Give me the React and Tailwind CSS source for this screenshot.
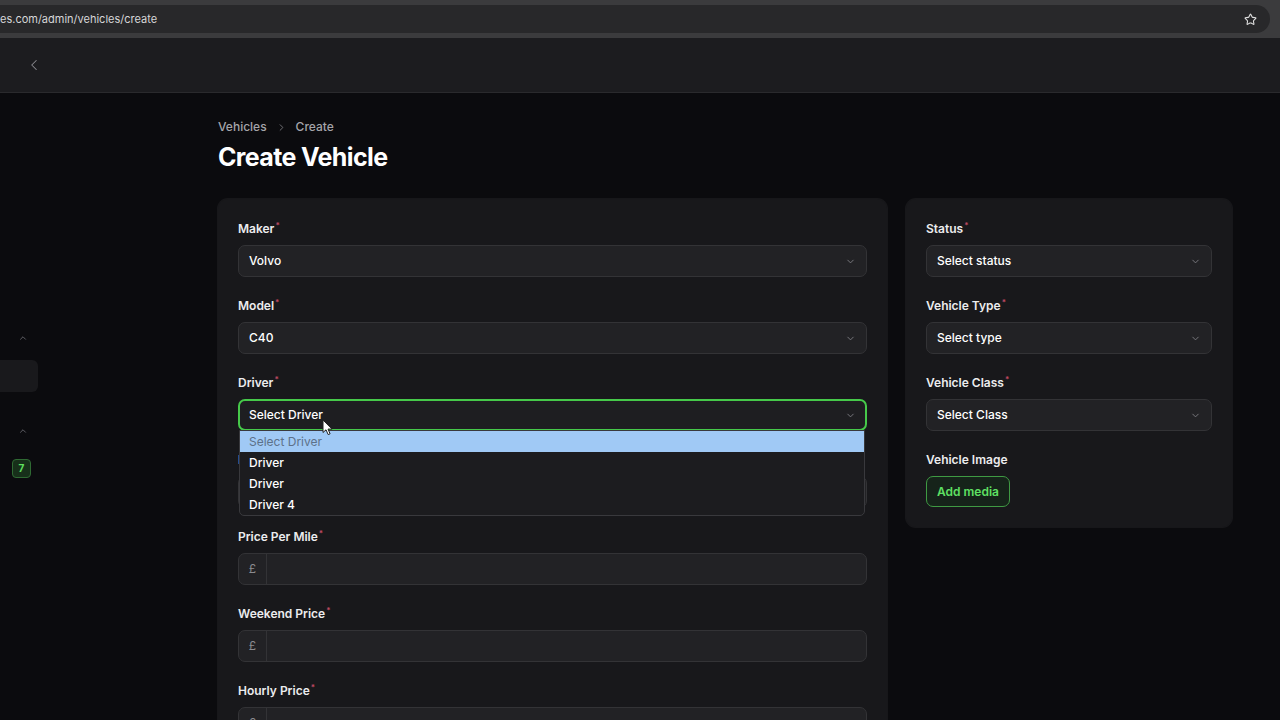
import React from "react";
import { ChevronDown, ChevronLeft, ChevronRight, ChevronUp, Star } from "lucide-react";

function Label({ text, required = true }) {
  return (
    <div className="h-5 flex items-center text-[12px] font-semibold text-[#ececee] leading-5">
      <span>{text}</span>
      {required && <span className="text-[#c04a63] text-[8px] leading-none -mt-[9px] ml-[1px]">*</span>}
    </div>
  );
}

function SelectField({ label, value, required = true }) {
  return (
    <div>
      <Label text={label} required={required} />
      <div className="mt-[6px] h-[32px] rounded-[7px] border border-[#333336] bg-[#222225] px-[10px] flex items-center justify-between">
        <span className="text-[12px] font-medium text-white">{value}</span>
        <ChevronDown className="w-[11px] h-[11px] text-[#7d7d82]" strokeWidth={2} />
      </div>
    </div>
  );
}

function PriceField({ label }) {
  return (
    <div>
      <Label text={label} />
      <div className="mt-[6px] h-[32px] rounded-[7px] border border-[#333336] bg-[#222225] flex items-stretch overflow-hidden">
        <div className="w-[28px] flex items-center justify-center border-r border-[#333336] text-[12px] text-[#8b8b90]">£</div>
        <div className="flex-1" />
      </div>
    </div>
  );
}

function DriverField() {
  const options = ["Driver", "Driver", "Driver 4"];
  return (
    <div className="relative">
      <Label text="Driver" />
      <div className="mt-[6px] h-[32px] rounded-[7px] border-2 border-[#46c94a] bg-[#1e1e21] px-[9px] flex items-center justify-between">
        <span className="text-[12px] font-medium text-white">Select Driver</span>
        <ChevronDown className="w-[11px] h-[11px] text-[#7d7d82]" strokeWidth={2} />
      </div>
      <div className="absolute left-[1px] right-[2px] top-[57px] z-10 bg-[#1c1c1f] border border-[#39393d] rounded-b-[5px] overflow-hidden">
        <div className="h-[21px] flex items-center px-[9px] bg-[#a0c9f5] text-[12px] text-[#5d7189]">Select Driver</div>
        {options.map((o, i) => (
          <div key={i} className="h-[21px] flex items-center px-[9px] text-[12px] font-medium text-white">{o}</div>
        ))}
      </div>
      <svg className="absolute left-[84px] top-[46px] z-20" width="12" height="17" viewBox="0 0 12 17">
        <path d="M1 1 L1 13.5 L4 10.8 L6.2 15.6 L8.1 14.8 L6 10.1 L10 10.1 Z" fill="#ffffff" stroke="#222" strokeWidth="1" strokeLinejoin="round" />
      </svg>
    </div>
  );
}

export default function App() {
  return (
    <div className="min-h-screen bg-[#0b0b0e] text-white" style={{ fontFamily: "Inter, 'Noto Sans', sans-serif" }}>
      {/* browser chrome */}
      <div className="h-[38px] bg-[#3b3b3d] flex items-start pt-[5px] pr-[10px]">
        <div className="flex-1 h-[28px] bg-[#28282a] rounded-r-full flex items-center justify-between pr-[13px]">
          <span className="text-[11px] text-[#d6d6d8]">es.com/admin/vehicles/create</span>
          <Star className="w-[13px] h-[13px] text-[#e0e0e0]" strokeWidth={2} />
        </div>
      </div>

      {/* top bar */}
      <div className="h-[55px] bg-[#1c1c1f] border-b border-[#2a2a2d] flex items-center pl-[25px]">
        <ChevronLeft className="w-[18px] h-[18px] text-[#8a8a8f]" strokeWidth={1.4} />
      </div>

      <div className="flex">
        {/* sidebar */}
        <div className="w-[218px] shrink-0 flex flex-col pt-[240px]">
          <div className="h-[10px] pl-[18px] flex items-center">
            <ChevronUp className="w-[10px] h-[10px] text-[#6e6e73]" strokeWidth={2} />
          </div>
          <div className="mt-[17px] h-[32px] w-[38px] rounded-r-[6px] bg-[#19191c]" />
          <div className="mt-[34px] h-[10px] pl-[18px] flex items-center">
            <ChevronUp className="w-[10px] h-[10px] text-[#6e6e73]" strokeWidth={2} />
          </div>
          <div className="mt-[23px] ml-[12px] w-[19px] h-[19px] rounded-[4px] bg-[#17301a] border border-[#2f6a33] flex items-center justify-center text-[10px] font-bold text-[#5fe05f]">7</div>
        </div>

        {/* main */}
        <div className="flex-1 pr-[48px] pt-[26px]">
          <div className="flex items-center text-[12px] leading-4 font-medium text-[#a5a5aa]">
            <span>Vehicles</span>
            <ChevronRight className="w-[11px] h-[11px] mx-[9px] text-[#76767b]" strokeWidth={2} />
            <span>Create</span>
          </div>
          <h1 className="mt-[6px] text-[25px] leading-8 font-bold tracking-tight text-white">Create Vehicle</h1>

          <div className="mt-[26px] grid grid-cols-[minmax(0,1fr)_326px] gap-[19px] items-start">
            <div className="bg-[#18181b] rounded-[10px] ring-1 ring-white/5 p-5 flex flex-col gap-[19px]">
              <SelectField label="Maker" value="Volvo" />
              <SelectField label="Model" value="C40" />
              <DriverField />
              <SelectField label="Registration" value="" />
              <PriceField label="Price Per Mile" />
              <PriceField label="Weekend Price" />
              <PriceField label="Hourly Price" />
            </div>

            <div className="bg-[#18181b] rounded-[10px] ring-1 ring-white/5 p-5 flex flex-col gap-[19px]">
              <SelectField label="Status" value="Select status" />
              <SelectField label="Vehicle Type" value="Select type" />
              <SelectField label="Vehicle Class" value="Select Class" />
              <div>
                <Label text="Vehicle Image" required={false} />
                <button className="mt-[6px] h-[31px] px-[10px] rounded-[7px] border border-[#3f9a43] bg-[#16231a] text-[12px] font-semibold text-[#5fe063]">Add media</button>
              </div>
            </div>
          </div>
        </div>
      </div>
    </div>
  );
}
